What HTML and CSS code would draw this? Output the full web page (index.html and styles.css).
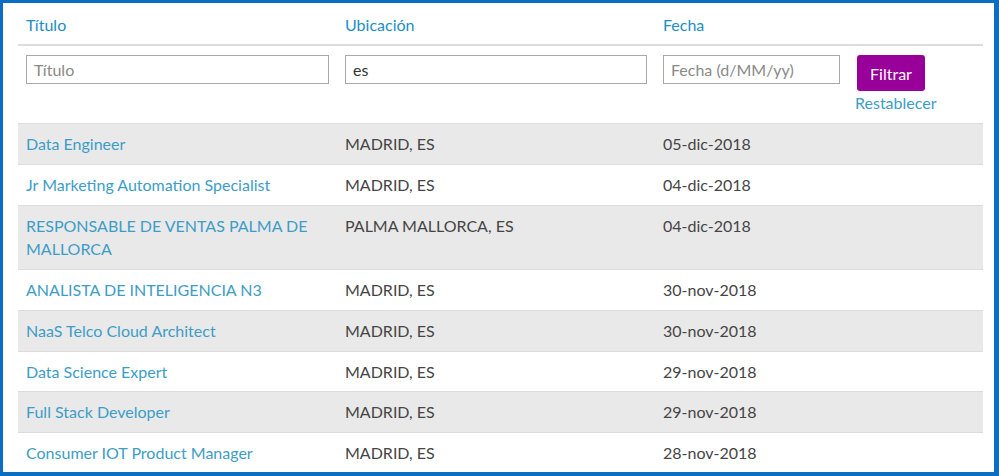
FILE: index.html
```html
<!DOCTYPE html>
<html lang="es">
<head>
<meta charset="utf-8">
<title>Empleos</title>
<link rel="stylesheet" href="styles.css">
</head>
<body>
<div class="frame">
  <table class="jobs">
    <colgroup>
      <col class="c-title"><col class="c-loc"><col class="c-date"><col class="c-act">
    </colgroup>
    <thead>
      <tr class="head">
        <th>Título</th><th>Ubicación</th><th>Fecha</th><th></th>
      </tr>
      <tr class="filters">
        <td><input class="field" type="text" placeholder="Título"></td>
        <td><input class="field" type="text" value="es"></td>
        <td><input class="field" type="text" placeholder="Fecha (d/MM/yy)"></td>
        <td><button class="btn">Filtrar</button><a class="reset" href="#">Restablecer</a></td>
      </tr>
    </thead>
    <tbody>
      <tr><td><a href="#">Data Engineer</a></td><td>MADRID, ES</td><td>05-dic-2018</td><td></td></tr>
      <tr><td><a href="#">Jr Marketing Automation Specialist</a></td><td>MADRID, ES</td><td>04-dic-2018</td><td></td></tr>
      <tr><td><a href="#">RESPONSABLE DE VENTAS PALMA DE MALLORCA</a></td><td>PALMA MALLORCA, ES</td><td>04-dic-2018</td><td></td></tr>
      <tr><td><a href="#">ANALISTA DE INTELIGENCIA N3</a></td><td>MADRID, ES</td><td>30-nov-2018</td><td></td></tr>
      <tr><td><a href="#">NaaS Telco Cloud Architect</a></td><td>MADRID, ES</td><td>30-nov-2018</td><td></td></tr>
      <tr><td><a href="#">Data Science Expert</a></td><td>MADRID, ES</td><td>29-nov-2018</td><td></td></tr>
      <tr><td><a href="#">Full Stack Developer</a></td><td>MADRID, ES</td><td>29-nov-2018</td><td></td></tr>
      <tr><td><a href="#">Consumer IOT Product Manager</a></td><td>MADRID, ES</td><td>28-nov-2018</td><td></td></tr>
    </tbody>
  </table>
</div>
</body>
</html>
```
FILE: styles.css
```css
html, body {
  margin: 0;
  padding: 0;
  background: #ffffff;
}
body {
  font-family: Lato, "Open Sans", sans-serif;
  font-size: 16px;
  color: #454545;
}
.frame {
  box-sizing: border-box;
  width: 999px;
  height: 476px;
  overflow: hidden;
  border-style: solid;
  border-color: #0a6fc3;
  border-width: 3px 5px 4px 3px;
  padding: 1px 11px 0 15px;
  background: #fff;
}
.jobs {
  width: 965px;
  table-layout: fixed;
  border-collapse: collapse;
}
.c-title { width: 319px; }
.c-loc { width: 318px; }
.c-date { width: 193px; }
.c-act { width: 135px; }
.jobs th,
.jobs td {
  padding: 8px;
  line-height: 23.75px;
  text-align: left;
  vertical-align: top;
}
.head th {
  font-weight: normal;
  color: #1d8ec4;
  padding-top: 9px;
  padding-bottom: 7px;
  line-height: 24px;
  border-bottom: 2px solid #dcdcdc;
}
.jobs .filters td {
  padding-top: 9px;
  padding-bottom: 8px;
  line-height: 24px;
}
.field {
  box-sizing: border-box;
  display: block;
  width: 100%;
  height: 29px;
  margin: 0;
  border: 1px solid #a9a9a9;
  padding: 0 7px;
  font-family: inherit;
  font-size: 16px;
  color: #333;
  background: #fff;
}
.field::placeholder { color: #8a8a8a; }
.btn {
  display: block;
  width: 68px;
  height: 36px;
  margin: 0 0 0 1px;
  border: 0;
  border-radius: 3px;
  background: #990099;
  color: #fff;
  font-family: inherit;
  font-size: 16px;
  padding: 0;
}
.reset {
  display: block;
  margin-left: -1px;
  color: #3d9dc7;
  text-decoration: none;
}
tbody tr {
  border-top: 1px solid #dcdcdc;
}
tbody tr:nth-child(odd) { background: #e9e9e9; }
tbody tr:nth-child(even) { background: #fff; }
tbody a {
  color: #3d9dc7;
  text-decoration: none;
}
```
